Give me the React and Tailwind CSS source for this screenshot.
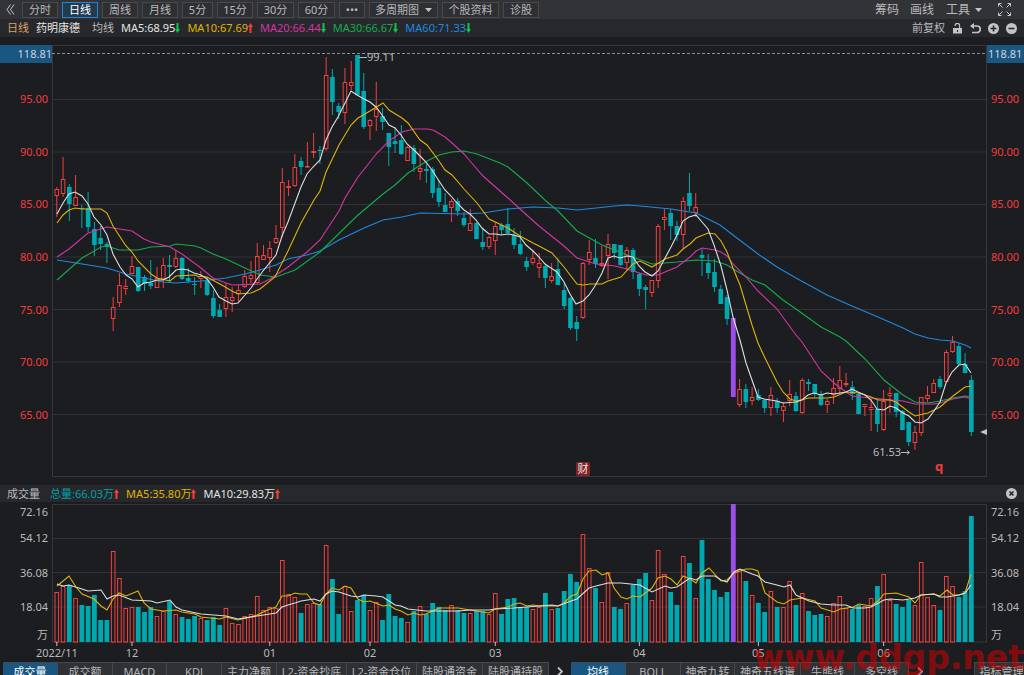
import React, { useState } from "react";

// one row per day: direction (r = up, g = down, p = limit), high, body top, body bottom, low, volume top
const DAYS = `
r 187 189 196 217 592|r 157 179 194 197 586|g 184 187 204 221 585|r 175 197 206 206 598|g 205 208 209 228 605
g 192 208 227 232 606|g 222 229 245 256 595|g 226 238 244 250 620|g 242 244 247 263 620|r 297 307 319 331 551
r 273 285 303 307 578|r 279 286 289 295 608|r 256 266 274 274 607|g 267 267 291 292 607|g 275 277 284 291 612
g 260 283 286 289 607|r 267 278 288 288 616|r 258 265 279 288 611|g 255 265 267 282 601|r 250 258 267 268 614
g 257 258 279 280 617|g 268 278 281 283 619|g 277 284 285 295 616|r 271 276 279 288 618|g 277 281 295 296 620
g 290 298 316 318 617|g 304 310 317 317 625|r 283 297 309 317 608|r 287 297 301 312 623|r 285 290 294 302 624
r 270 276 287 288 616|r 261 275 279 283 614|r 243 256 283 284 596|r 245 255 260 260 610|r 241 248 258 272 607
r 225 238 243 244 608|r 168 182 228 237 560|r 180 186 188 196 594|r 154 167 186 187 597|g 157 161 167 175 613
r 142 166 167 168 604|r 133 151 153 158 603|g 146 150 151 164 604|r 57 75 149 151 545|g 69 77 102 115 579
g 103 106 112 119 614|r 68 82 113 124 586|r 61 82 86 90 611|g 55 55 95 95 600|g 73 91 127 129 595
r 119 120 126 140 610|r 82 109 117 131 602|g 108 116 122 130 620|g 133 133 147 166 594|g 127 141 144 153 616
g 125 140 154 155 618|r 146 147 161 161 622|g 145 148 164 172 611|r 149 168 172 180 606|g 162 169 171 183 614
g 167 169 193 198 603|g 180 188 202 207 607|g 193 205 212 212 610|r 199 201 208 222 605|g 198 201 211 216 610
g 212 218 225 227 613|r 209 223 231 231 613|g 222 223 239 239 611|g 228 242 247 250 611|r 236 237 247 249 614
r 222 226 241 255 593|g 223 225 230 235 614|g 208 224 233 233 599|g 228 235 245 249 598|g 231 244 254 255 607
g 257 261 267 271 607|r 250 258 263 265 609|r 253 263 268 278 607|g 265 266 278 288 593|r 263 276 281 283 609
g 258 269 285 285 608|g 283 290 306 309 591|g 297 298 328 330 574|g 316 322 329 341 582|r 262 263 318 319 534
r 240 252 260 265 568|g 239 258 264 268 588|r 246 263 266 267 602|r 234 244 256 279 572|g 244 244 253 259 607
g 245 245 265 266 609|r 247 250 263 270 603|g 248 250 272 279 585|g 273 274 289 296 579|g 285 287 290 309 573
r 280 280 293 297 600|r 224 226 281 288 550|r 209 217 220 230 574|g 209 213 226 240 592|g 221 226 235 241 605
r 197 201 235 248 556|g 173 193 206 211 563|r 193 207 213 217 598|g 248 255 258 276 540|g 254 263 273 279 579
g 259 272 287 292 590|g 285 289 304 304 597|g 295 297 319 325 592|p 318 318 397 397 504|r 379 389 405 407 569
g 384 389 402 408 581|r 387 397 401 405 595|g 389 395 400 401 603|g 399 400 408 413 612|r 387 395 408 416 591
g 398 401 408 413 607|r 402 406 411 422 607|r 380 394 401 406 581|g 392 396 411 412 605|r 378 380 413 414 593
g 379 382 384 391 611|g 384 384 394 397 615|g 391 394 405 406 614|r 399 401 405 413 616|r 378 388 395 404 603
r 366 380 389 394 596|r 373 383 385 387 608|g 381 387 394 400 609|g 393 394 414 414 605|r 404 404 407 416 606
r 399 407 410 431 598|g 400 409 424 432 586|r 390 401 430 431 574|r 387 393 396 413 600|g 393 393 412 417 604
g 410 411 430 430 607|g 422 422 442 446 600|r 426 432 443 450 605|r 397 397 433 436 562|r 386 395 399 402 597
r 379 383 393 393 605|g 376 379 387 389 610|r 350 352 382 382 576|r 336 342 352 353 586|g 343 346 364 365 597
g 353 364 373 373 591|g 375 380 432 436 516`
  .trim()
  .split(/[|\n]/)
  .map((row) => {
    const [dir, ...n] = row.split(" ");
    const [high, top, bottom, low, vol] = n.map(Number);
    return { dir, high, top, bottom, low, vol };
  });

const PRICE_LINES = [
  {
    color: "#1c8ae4",
    points:
      "57,260 76,263 107,268 126,274 144,278 163,282 176,283 201,281 226,278 245,274 260,270 276,265 288,259 307,255 320,251 339,240 364,228 383,220 402,217 420,213 464,214 483,213 508,209 533,207 558,208 577,210 596,208 615,206 627,205 640,206 671,209 696,213 708,219 720,225 733,235 758,254 777,267 796,278 827,295 852,306 878,317 903,328 915,334 928,338 940,340 953,341 965,345 971,348",
  },
  {
    color: "#14ab4e",
    points:
      "57,280 82,258 101,247 107,246 119,250 138,250 151,247 170,246 176,244 195,246 201,248 213,254 226,259 245,268 260,275 276,277 295,270 320,252 358,215 364,210 383,194 395,185 408,173 427,161 439,155 452,152 464,151 477,154 500,163 508,167 527,183 546,201 558,211 577,231 602,245 627,255 652,264 677,262 696,260 715,261 727,265 740,273 752,280 765,285 783,300 796,309 821,327 840,337 846,341 865,359 884,380 903,395 915,402 928,403 940,401 953,398 965,396 971,397",
  },
  {
    color: "#d435a4",
    points:
      "57,257 69,249 88,233 107,227 113,228 126,230 132,231 144,239 151,242 170,247 182,254 201,268 213,278 226,283 232,285 260,284 270,279 288,267 307,252 320,240 339,211 345,198 358,177 377,153 389,141 402,132 414,129 427,129 433,130 445,137 452,143 464,154 470,161 483,176 500,191 508,198 520,209 539,226 564,246 577,258 596,264 615,266 627,269 646,275 658,275 665,272 677,267 690,257 696,251 702,248 715,250 721,252 727,256 733,264 746,277 758,291 777,309 796,335 802,342 821,371 834,383 846,392 852,396 871,398 903,401 915,404 934,404 940,403 953,399 965,397 971,399",
  },
  {
    color: "#deb30a",
    points:
      "57,223 63,215 69,210 75,208 82,209 101,209 107,213 113,226 126,246 132,252 138,261 151,274 157,278 170,281 176,276 195,275 199,277 201,276 207,277 220,284 232,291 238,294 251,293 260,289 275,277 288,251 301,223 314,200 320,191 326,172 339,145 351,125 358,118 370,111 383,103 389,110 402,118 408,123 420,140 427,145 439,161 445,170 452,175 464,189 477,203 489,219 508,228 520,236 533,243 539,246 552,253 564,267 577,284 583,285 590,284 602,284 608,281 621,277 633,264 640,261 652,267 665,259 677,255 683,249 690,244 696,238 708,233 715,234 721,241 727,252 733,268 740,285 752,325 758,343 765,358 777,382 783,392 790,399 796,401 809,398 827,398 834,397 846,392 859,393 871,397 878,400 890,400 896,402 909,412 915,416 928,413 940,407 953,396 965,387 971,386",
  },
  {
    color: "#dedede",
    points:
      "57,214 63,203 69,194 75,192 82,196 88,204 94,217 101,225 107,235 113,254 120,267 126,275 132,279 138,287 144,283 151,282 157,280 163,280 169,277 176,270 182,269 188,270 194,273 201,275 207,279 213,287 219,297 226,301 232,304 238,303 245,295 251,288 257,279 263,271 276,255 282,236 288,222 301,187 307,174 313,167 320,160 326,140 332,127 338,117 345,103 351,91 357,95 364,99 370,102 376,107 382,115 389,125 395,128 401,135 407,144 414,150 420,156 426,162 432,170 439,181 445,190 451,196 457,203 464,210 470,214 476,220 482,228 489,234 496,234 501,235 508,234 514,235 520,237 526,245 533,251 539,257 545,264 551,268 557,272 564,282 570,294 576,304 583,301 589,295 595,286 602,273 608,258 614,256 620,258 627,256 633,257 639,266 645,272 652,276 658,271 664,260 671,247 677,235 683,221 689,217 696,215 702,222 708,229 714,245 721,266 727,290 733,317 740,340 746,363 752,380 758,397 764,399 777,401 783,403 796,402 802,400 808,395 814,393 821,395 827,393 834,394 846,392 852,389 858,392 865,395 871,400 877,409 884,410 890,406 896,408 903,413 909,416 915,422 921,423 928,419 934,411 940,402 946,383 952,372 959,365 965,364 971,373",
  },
];

const VOLUME_LINES = [
  {
    color: "#deb30a",
    points:
      "57,586 69,576 76,587 82,594 94,599 101,606 107,610 113,599 119,593 126,596 138,591 144,603 151,609 163,611 176,610 182,612 195,614 201,617 220,619 226,617 238,620 251,617 257,615 270,609 276,607 282,596 288,596 295,593 300,594 307,594 314,603 320,605 326,594 332,588 339,590 345,586 351,588 358,599 364,602 370,601 383,606 389,605 395,609 401,611 408,615 414,613 420,615 426,614 439,608 458,608 470,610 489,613 495,609 508,607 514,604 520,603 527,606 533,605 539,606 558,606 564,603 571,596 577,594 583,579 589,571 596,570 602,575 608,573 614,588 621,597 627,599 633,596 640,597 652,588 658,578 665,576 671,579 677,585 683,576 690,579 696,583 702,573 709,568 721,581 727,580 734,573 746,569 752,569 758,571 765,593 777,602 784,604 790,600 796,599 802,598 815,601 821,608 834,612 840,609 853,607 859,604 871,606 878,601 884,594 896,593 909,597 915,603 921,595 934,594 940,596 947,590 953,595 959,595 965,593 971,574",
  },
  {
    color: "#dedede",
    points:
      "57,584 63,586 69,585 82,589 88,591 101,590 107,599 113,596 119,595 132,600 151,601 157,603 170,600 176,607 182,610 201,614 226,616 238,619 257,616 276,613 282,607 288,605 295,603 301,601 314,599 320,601 326,594 332,591 339,592 351,596 358,597 364,595 376,596 383,597 395,605 401,606 408,609 426,611 458,611 470,610 489,610 495,609 514,608 539,606 552,605 558,606 571,601 577,599 589,588 596,586 608,583 621,583 640,585 652,592 665,586 671,588 677,587 690,578 696,580 702,576 715,576 721,580 727,582 734,572 740,569 752,574 758,576 765,582 777,585 784,587 790,585 796,595 809,601 821,604 834,605 846,605 853,608 865,608 871,607 884,600 890,599 903,600 915,598 921,595 934,594 940,597 947,597 959,595 965,593 971,585",
  },
];

const UP = "#f04040";
const DOWN = "#00a8b0";
const LIMIT = "#9c4eea";
const GRID = "#303236";

const PRICES = ["95.00", "90.00", "85.00", "80.00", "75.00", "70.00", "65.00"];

const MONTHS = [
  { day: 0, label: "2022/11" },
  { day: 12, label: "12" },
  { day: 34, label: "01" },
  { day: 50, label: "02" },
  { day: 70, label: "03" },
  { day: 93, label: "04" },
  { day: 112, label: "05" },
  { day: 132, label: "06" },
];

const PERIODS = [
  { label: "分时", width: "w-9" },
  { label: "日线", width: "w-9" },
  { label: "周线", width: "w-9" },
  { label: "月线", width: "w-9" },
  { label: "5分", width: "w-[31px]" },
  { label: "15分", width: "w-[36px]" },
  { label: "30分", width: "w-[37px]" },
  { label: "60分", width: "w-[37px]" },
  { label: "•••", width: "w-[26px]" },
  { label: "多周期图", width: "w-[69px]", menu: true },
  { label: "个股资料", width: "w-[57px]" },
  { label: "诊股", width: "w-9" },
];

const VOLUME_TABS = [
  { label: "成交量", width: "w-[55px]" },
  { label: "成交额", width: "w-[55px]" },
  { label: "MACD", width: "w-[54px]" },
  { label: "KDJ", width: "w-[55px]" },
  { label: "主力净额", width: "w-[55px]" },
  { label: "L2-资金抄底", width: "w-[70px]" },
  { label: "L2-资金仓位", width: "w-[70px]" },
  { label: "陆股通资金", width: "w-[66px]" },
  { label: "陆股通持股", width: "w-[66px]" },
];

const PRICE_TABS = [
  { label: "均线", width: "w-[55px]" },
  { label: "BOLL", width: "w-[55px]" },
  { label: "神奇九转", width: "w-[54px]" },
  { label: "神奇五线谱", width: "w-[66px]" },
  { label: "牛熊线", width: "w-[54px]" },
  { label: "多空线", width: "w-[54px]" },
];

// plot area spans x 52..987 in chart units
const dayX = (i) => 56.8 + 6.264 * i;
const percentX = (x) => `${((x - 52) / 935) * 100}%`;

const Trend = ({ up }) => (
  <svg className="w-[5px] h-[10px] shrink-0" viewBox="0 0 5 10">
    {up ? (
      <path d="M2.5 0L5 4H3.5V10H1.5V4H0Z" fill="#ff3b3b" />
    ) : (
      <path d="M2.5 10L5 6H3.5V0H1.5V6H0Z" fill="#12c24f" />
    )}
  </svg>
);

const Stat = ({ text, up, className }) => (
  <span className={`flex items-center whitespace-nowrap ${className}`}>
    {text}
    <Trend up={up} />
  </span>
);

const Caret = () => (
  <svg className="w-[7px] h-[4px]" viewBox="0 0 7 4">
    <path d="M0 0H7L3.5 4Z" fill="#c3c4c6" />
  </svg>
);

const Lines = ({ lines }) =>
  lines.map((line) => (
    <polyline key={line.color} points={line.points} fill="none" stroke={line.color} strokeWidth="1.1" />
  ));

const Candle = ({ day, x }) => {
  if (day.dir === "p") {
    return <rect x={x - 2.4} y={day.top} width="4.8" height={day.bottom - day.top} fill={LIMIT} />;
  }
  if (day.dir === "g") {
    return (
      <g>
        <rect x={x - 0.5} y={day.high} width="1" height={day.low - day.high} fill={DOWN} />
        <rect x={x - 2.3} y={day.top} width="4.6" height={Math.max(1, day.bottom - day.top)} fill={DOWN} />
      </g>
    );
  }
  return (
    <g stroke={UP} fill="none">
      <path d={`M${x} ${day.high}V${day.top}M${x} ${day.bottom}V${day.low}`} />
      <rect x={x - 1.8} y={day.top + 0.5} width="3.6" height={Math.max(0.5, day.bottom - day.top - 1)} />
    </g>
  );
};

const PriceChart = () => (
  <svg className="block w-full h-full" viewBox="52 45 935 432" preserveAspectRatio="none">
    {[99.5, 152, 204.5, 257, 309.5, 362, 414.5].map((y) => (
      <path key={y} d={`M52 ${y}H987`} stroke={GRID} />
    ))}
    <path d="M52.5 45.5H986.5V476.5H52.5Z" fill="none" stroke="#36383c" />
    <path d="M52 53.5H987" stroke="#8d8e90" strokeDasharray="3 2" />
    {DAYS.map((day, i) => (
      <Candle key={i} day={day} x={dayX(i)} />
    ))}
    <Lines lines={PRICE_LINES} />
    <path d="M359 57.5H367" stroke="#b4b5b7" />
    <path d="M980 432L987 429V435Z" fill="#c3c4c6" />
  </svg>
);

const VolumeChart = () => (
  <svg className="block w-full h-full" viewBox="52 504 935 142" preserveAspectRatio="none">
    {[538.5, 572.5, 607].map((y) => (
      <path key={y} d={`M52 ${y}H987`} stroke={GRID} />
    ))}
    <path d="M52.5 504.5H986.5V642H52.5Z" fill="none" stroke="#36383c" />
    {DAYS.map((day, i) => {
      const x = dayX(i);
      return day.dir === "r" ? (
        <rect key={i} x={x - 1.8} y={day.vol + 0.5} width="3.6" height={641.5 - day.vol} fill="none" stroke={UP} />
      ) : (
        <rect
          key={i}
          x={x - 2.4}
          y={day.vol}
          width="4.8"
          height={642 - day.vol}
          fill={day.dir === "p" ? LIMIT : DOWN}
        />
      );
    })}
    <Lines lines={VOLUME_LINES} />
    {MONTHS.map((m) => (
      <path key={m.day} d={`M${dayX(m.day)} 642V646`} stroke="#c3c4c6" />
    ))}
  </svg>
);

const PriceAxis = ({ side }) => (
  <div className={`shrink-0 ${side === "left" ? "w-[52px] text-right" : "w-[37px] text-left"}`}>
    <div
      className={`h-[18px] leading-[18px] bg-[#1a5682] text-[#c9d3db] ${side === "left" ? "" : "pl-px"}`}
    >
      118.81
    </div>
    <div
      className={`mt-[10px] h-[368px] grid grid-rows-7 items-center text-[#f23c3c] ${
        side === "left" ? "pr-1" : "pl-1"
      }`}
    >
      {PRICES.map((p) => (
        <span key={p}>{p}</span>
      ))}
    </div>
  </div>
);

const VolumeAxis = ({ side }) => (
  <div
    className={`shrink-0 flex flex-col ${side === "left" ? "w-[52px] pr-1 text-right" : "w-[37px] pl-1 text-left"}`}
  >
    <span className="h-4 leading-4">72.16</span>
    <span className="h-9 leading-9">54.12</span>
    <span className="h-[34px] leading-[34px]">36.08</span>
    <span className="h-[34px] leading-[34px]">18.04</span>
    <span className="h-[22px] leading-[22px]">万</span>
  </div>
);

const TabGroup = ({ tabs, active, onSelect }) => (
  <div className="flex shrink-0">
    {tabs.map((tab) => (
      <button
        key={tab.label}
        type="button"
        onClick={() => onSelect(tab.label)}
        className={`${tab.width} h-[18px] leading-[17px] shrink-0 whitespace-nowrap border-t border-r border-[#46484c] ${
          tab.label === active ? "bg-[#1a5682] text-white" : "bg-[#2f3134] text-[#b4b5b7]"
        }`}
      >
        {tab.label}
      </button>
    ))}
  </div>
);

const NextButton = () => (
  <button type="button" aria-label="更多指标" className="w-[22px] h-[18px] shrink-0 flex items-center justify-center">
    <svg className="w-[6px] h-[9px]" viewBox="0 0 6 9">
      <path d="M1 0.5L5 4.5L1 8.5" fill="none" stroke="#c3c4c6" strokeWidth="1.8" />
    </svg>
  </button>
);

const App = () => {
  const [period, setPeriod] = useState("日线");
  const [volumeTab, setVolumeTab] = useState("成交量");
  const [priceTab, setPriceTab] = useState("均线");

  return (
    <div className="relative min-h-screen overflow-hidden bg-[#1c1d20] text-[#b9babc] text-[11px] leading-4 font-['Noto_Sans','Noto_Sans_CJK_SC',sans-serif]">
      {/* Toolbar */}
      <header className="h-[19px] flex items-center justify-between bg-[#323337] pl-[6px] pr-[13px]">
        <div className="flex items-center">
          <button type="button" aria-label="收起" className="w-4">
            <svg className="w-[9px] h-[11px]" viewBox="0 0 9 11">
              <path d="M4.5 0.5L1 5.5L4.5 10.5M8 0.5L4.5 5.5L8 10.5" fill="none" stroke="#c3c4c6" />
            </svg>
          </button>
          <div className="flex gap-1">
            {PERIODS.map((p) => (
              <button
                key={p.label}
                type="button"
                onClick={() => setPeriod(p.label)}
                className={`${p.width} h-4 leading-[14px] flex items-center justify-center gap-[6px] whitespace-nowrap border ${
                  p.label === period
                    ? "border-[#1f86d8] bg-[#223b50] text-white"
                    : "border-[#47494d] bg-[#2d2f32]"
                }`}
              >
                {p.label}
                {p.menu && <Caret />}
              </button>
            ))}
          </div>
        </div>
        <div className="flex items-center text-[12px]">
          <button type="button">筹码</button>
          <button type="button" className="ml-[11px]">画线</button>
          <button type="button" className="ml-3 flex items-center gap-[5px]">
            工具
            <Caret />
          </button>
          <button type="button" aria-label="全屏" className="ml-4">
            <svg className="w-[13px] h-[13px]" viewBox="0 0 13 13" fill="none" stroke="#c3c4c6">
              <path d="M0.5 3.5V0.5H3.5M0.5 0.5L4.5 4.5M9.5 0.5H12.5V3.5M12.5 0.5L8.5 4.5M0.5 9.5V12.5H3.5M0.5 12.5L4.5 8.5M12.5 9.5V12.5H9.5M12.5 12.5L8.5 8.5" />
            </svg>
          </button>
        </div>
      </header>

      {/* Moving averages */}
      <div className="h-[18px] flex items-center justify-between bg-[#26282b] px-[7px]">
        <div className="flex items-center gap-[7px]">
          <span className="text-[#d9a066]">日线</span>
          <span className="text-[#e4e4e4]">药明康德</span>
          <span className="ml-[5px]">均线</span>
          <Stat text="MA5:68.95" className="text-[#e4e4e4]" />
          <Stat text="MA10:67.69" up className="text-[#e0b400]" />
          <Stat text="MA20:66.44" className="text-[#d435a4]" />
          <Stat text="MA30:66.67" className="text-[#16ab50]" />
          <Stat text="MA60:71.33" className="text-[#1c8ae4]" />
        </div>
        <div className="flex items-center gap-[7px]">
          <button type="button">前复权</button>
          <button type="button" aria-label="锁定">
            <svg className="w-[11px] h-[11px]" viewBox="0 0 11 11">
              <path d="M3.2 3V2.5A2.2 2.2 0 0 1 7.6 2.5V5.5" fill="none" stroke="#c3c4c6" strokeWidth="1.2" />
              <path d="M1 5H10V10.5H1ZM5 7V9H6V7Z" fill="#c3c4c6" fillRule="evenodd" />
            </svg>
          </button>
          <button type="button" aria-label="撤销">
            <svg className="w-[11px] h-[11px]" viewBox="0 0 11 11">
              <path d="M2 3H7A3.2 3.2 0 0 1 7 9.5H2" fill="none" stroke="#c3c4c6" strokeWidth="1.7" />
              <path d="M0 3L4 0V6Z" fill="#c3c4c6" />
            </svg>
          </button>
          <button type="button" aria-label="放大">
            <svg className="w-[11px] h-[11px]" viewBox="0 0 11 11">
              <circle cx="5.5" cy="5.5" r="5.5" fill="#c3c4c6" />
              <path d="M5.5 2.5V8.5M2.5 5.5H8.5" stroke="#26282b" strokeWidth="1.6" />
            </svg>
          </button>
          <button type="button" aria-label="缩小">
            <svg className="w-[11px] h-[11px]" viewBox="0 0 11 11">
              <circle cx="5.5" cy="5.5" r="5.5" fill="#c3c4c6" />
              <path d="M2.5 5.5H8.5" stroke="#26282b" strokeWidth="1.6" />
            </svg>
          </button>
        </div>
      </div>

      {/* Price chart */}
      <section className="mt-2 flex h-[432px]">
        <PriceAxis side="left" />
        <div className="relative flex-1 min-w-0">
          <PriceChart />
          <span className="absolute top-[4px]" style={{ left: percentX(367) }}>
            99.11
          </span>
          <span className="absolute top-[399px] flex items-center" style={{ left: percentX(873) }}>
            61.53
            <svg className="w-[9px] h-[5px]" viewBox="0 0 9 5">
              <path d="M0 2.5H8M6 0.5L8.5 2.5L6 4.5" fill="none" stroke="#b4b5b7" />
            </svg>
          </span>
          <span
            className="absolute top-[417px] w-[14px] h-[14px] leading-[13px] text-center rounded-xs bg-[#7d2628] text-[#f0dede]"
            style={{ left: percentX(576) }}
          >
            财
          </span>
          <span className="absolute top-[413px] text-[13px] font-bold text-[#f23c3c]" style={{ left: percentX(935) }}>
            q
          </span>
        </div>
        <PriceAxis side="right" />
      </section>

      {/* Volume chart */}
      <div className="mt-2 mb-[2px] h-[17px] flex items-center justify-between bg-[#26282b] px-[7px]">
        <div className="flex items-center gap-[7px]">
          <span className="mr-[3px]">成交量</span>
          <Stat text="总量:66.03万" up className="text-[#00a0a8]" />
          <Stat text="MA5:35.80万" up className="text-[#e0b400]" />
          <Stat text="MA10:29.83万" up className="text-[#e4e4e4]" />
        </div>
        <button type="button" aria-label="关闭">
          <svg className="w-[11px] h-[11px]" viewBox="0 0 11 11">
            <circle cx="5.5" cy="5.5" r="5.5" fill="#c3c4c6" />
            <path d="M3.5 3.5L7.5 7.5M7.5 3.5L3.5 7.5" stroke="#26282b" strokeWidth="1.6" />
          </svg>
        </button>
      </div>
      <section className="flex h-[142px]">
        <VolumeAxis side="left" />
        <div className="flex-1 min-w-0">
          <VolumeChart />
        </div>
        <VolumeAxis side="right" />
      </section>
      <div className="h-4 pl-[52px] pr-[37px]">
        <div className="relative h-full">
          {MONTHS.map((m) => (
            <span
              key={m.day}
              className="absolute -top-px -translate-x-1/2"
              style={{ left: percentX(dayX(m.day)) }}
            >
              {m.label}
            </span>
          ))}
        </div>
      </div>

      {/* Indicator tabs */}
      <footer className="h-[13px] overflow-hidden flex items-start justify-between pl-[3px]">
        <div className="flex">
          <TabGroup tabs={VOLUME_TABS} active={volumeTab} onSelect={setVolumeTab} />
          <NextButton />
          <TabGroup tabs={PRICE_TABS} active={priceTab} onSelect={setPriceTab} />
          <NextButton />
        </div>
        <button
          type="button"
          className="w-[50px] h-[18px] leading-[17px] pl-1 shrink-0 whitespace-nowrap border-t border-l border-[#46484c] bg-[#2f3134]"
        >
          指标管理
        </button>
      </footer>

      {/* Site watermark */}
      <span className="absolute right-0 bottom-[-3px] text-[33px] leading-[40px] font-bold text-[#d20000]/55 pointer-events-none font-['DejaVu_Sans',sans-serif]">
        www.ddgp.net
      </span>
    </div>
  );
};

export default App;
